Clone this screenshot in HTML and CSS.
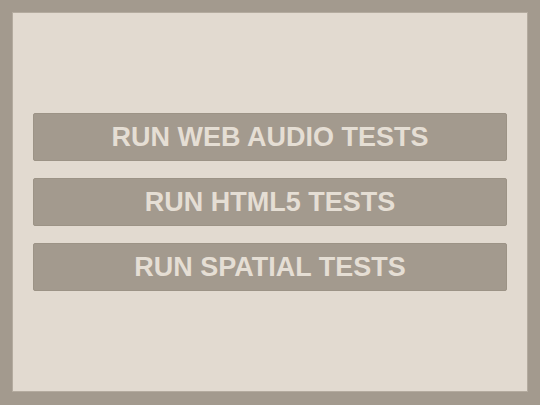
FILE: index.html
```html
<!DOCTYPE html>
<html>
<head>
<meta charset="utf-8">
<link rel="stylesheet" href="styles.css">
</head>
<body>
<div class="panel">
  <div class="buttons">
    <button class="btn">RUN WEB AUDIO TESTS</button>
    <button class="btn">RUN HTML5 TESTS</button>
    <button class="btn">RUN SPATIAL TESTS</button>
  </div>
</div>
</body>
</html>
```

FILE: styles.css
```css
html, body {
  margin: 0;
  padding: 0;
}
body {
  width: 540px;
  height: 405px;
  background: #a39a8e;
  padding: 12px;
  box-sizing: border-box;
  font-family: "Liberation Sans", Arial, sans-serif;
}
.panel {
  width: 516px;
  height: 380px;
  box-sizing: border-box;
  background: #e2dad0;
  border: 1px solid #b4ab9f;
  display: flex;
  align-items: center;
  padding: 0 20px;
}
.buttons {
  width: 100%;
  display: flex;
  flex-direction: column;
  gap: 17px;
}
.btn {
  height: 48px;
  width: 100%;
  background: #a39a8e;
  border: 1px solid #9c9386;
  border-radius: 2px;
  color: #e5ded4;
  font-family: "Liberation Sans", Arial, sans-serif;
  font-weight: bold;
  font-size: 27px;
  padding: 0;
  margin: 0;
}
```
